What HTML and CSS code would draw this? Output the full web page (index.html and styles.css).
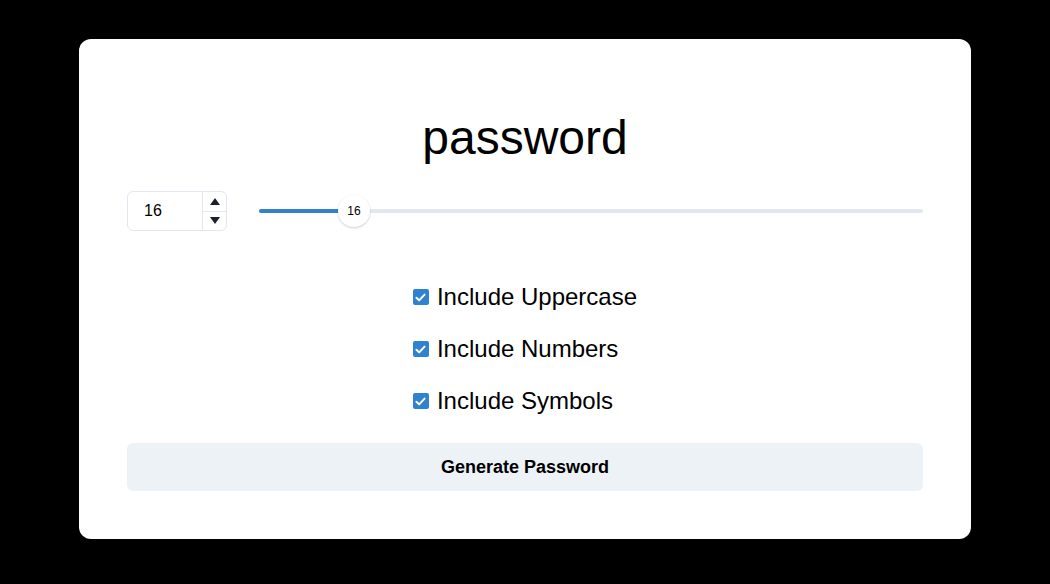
FILE: index.html
```html
<!DOCTYPE html>
<html>
<head>
<meta charset="utf-8">
<link rel="stylesheet" href="styles.css">
</head>
<body>
<div class="card">
  <h1 class="title">password</h1>
  <div class="controls">
    <div class="num-input">
      <div class="num-value">16</div>
      <div class="stepper">
        <div class="step step-up"><span class="tri-up"></span></div>
        <div class="step step-down"><span class="tri-down"></span></div>
      </div>
    </div>
    <div class="slider">
      <div class="track">
        <div class="fill" style="width:14.3%"></div>
      </div>
      <div class="thumb" style="left:14.3%">16</div>
    </div>
  </div>
  <div class="options">
    <div class="options-inner">
      <label class="opt"><span class="box"><svg viewBox="0 0 12 10" width="11" height="9"><polyline points="1.5,5.3 4.5,8.2 10.5,1.8" fill="none" stroke="#fff" stroke-width="2.2" stroke-linecap="round" stroke-linejoin="round"/></svg></span>Include Uppercase</label>
      <label class="opt"><span class="box"><svg viewBox="0 0 12 10" width="11" height="9"><polyline points="1.5,5.3 4.5,8.2 10.5,1.8" fill="none" stroke="#fff" stroke-width="2.2" stroke-linecap="round" stroke-linejoin="round"/></svg></span>Include Numbers</label>
      <label class="opt"><span class="box"><svg viewBox="0 0 12 10" width="11" height="9"><polyline points="1.5,5.3 4.5,8.2 10.5,1.8" fill="none" stroke="#fff" stroke-width="2.2" stroke-linecap="round" stroke-linejoin="round"/></svg></span>Include Symbols</label>
    </div>
  </div>
  <button class="gen">Generate Password</button>
</div>
</body>
</html>
```
FILE: styles.css
```css
* { box-sizing: border-box; }
html, body { margin: 0; padding: 0; }
body {
  background: #000;
  width: 1050px;
  height: 584px;
  font-family: "Liberation Sans", Arial, sans-serif;
  color: #000;
  padding-top: 39px;
  padding-left: 79px;
}
.card {
  width: 892px;
  height: 500px;
  background: #fff;
  border-radius: 12px;
  padding: 70px 48px 48px;
  display: flex;
  flex-direction: column;
}
.title {
  margin: 0;
  font-size: 48px;
  font-weight: 400;
  line-height: 58px;
  text-align: center;
}
.controls {
  margin-top: 24px;
  display: flex;
  align-items: center;
  height: 40px;
  flex: none;
}
.num-input {
  width: 100px;
  height: 40px;
  border: 1px solid #e2e8f0;
  border-radius: 6px;
  display: flex;
  flex: none;
}
.num-value {
  flex: 1;
  padding-left: 16px;
  font-size: 16px;
  line-height: 38px;
}
.stepper {
  width: 24px;
  border-left: 1px solid #e2e8f0;
  display: flex;
  flex-direction: column;
}
.step {
  flex: 1;
  display: flex;
  align-items: center;
  justify-content: center;
}
.step-down { border-top: 1px solid #e2e8f0; }
.tri-up {
  width: 0; height: 0;
  border-left: 5.5px solid transparent;
  border-right: 5.5px solid transparent;
  border-bottom: 7px solid #1a202c;
}
.tri-down {
  width: 0; height: 0;
  border-left: 5.5px solid transparent;
  border-right: 5.5px solid transparent;
  border-top: 7px solid #1a202c;
}
.slider {
  position: relative;
  flex: 1;
  margin-left: 32px;
  height: 32px;
  display: flex;
  align-items: center;
}
.track {
  width: 100%;
  height: 4px;
  background: #e2e8f0;
  border-radius: 2px;
  overflow: hidden;
}
.fill {
  height: 100%;
  background: #3182ce;
}
.thumb {
  position: absolute;
  top: 0;
  width: 32px;
  height: 32px;
  margin-left: -16px;
  border-radius: 50%;
  background: #fff;
  box-shadow: 0 1px 3px rgba(0,0,0,0.12), 0 1px 2px rgba(0,0,0,0.08);
  font-size: 12px;
  display: flex;
  align-items: center;
  justify-content: center;
  color: #000;
}
.options {
  margin-top: 48px;
  display: flex;
  justify-content: center;
  flex: none;
}
.options-inner {
  display: flex;
  flex-direction: column;
  gap: 16px;
}
.opt {
  display: flex;
  align-items: center;
  font-size: 24px;
  line-height: 36px;
  height: 36px;
}
.box {
  width: 16px;
  height: 16px;
  background: #3182ce;
  border-radius: 2px;
  margin-right: 8px;
  display: flex;
  align-items: center;
  justify-content: center;
}
.gen {
  margin-top: 24px;
  height: 48px;
  flex: none;
  width: 100%;
  border: 0;
  border-radius: 6px;
  background: #edf2f7;
  font-family: "Liberation Sans", Arial, sans-serif;
  font-weight: 700;
  font-size: 18px;
  color: #000;
}
```
